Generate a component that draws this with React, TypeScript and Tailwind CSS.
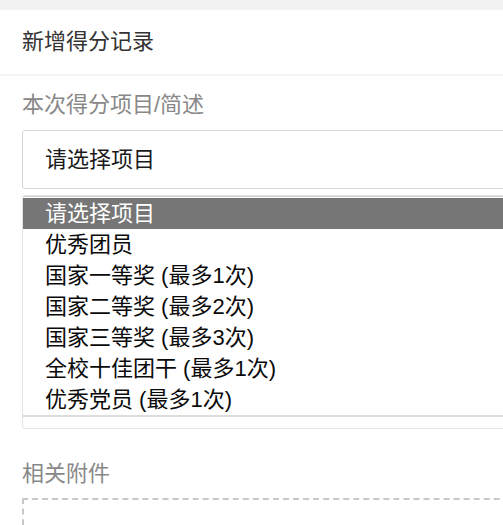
import React from "react";

const font = { fontFamily: '"Liberation Sans", Arial, "Noto Sans CJK SC", sans-serif' };

const options = [
  "请选择项目",
  "优秀团员",
  "国家一等奖 (最多1次)",
  "国家二等奖 (最多2次)",
  "国家三等奖 (最多3次)",
  "全校十佳团干 (最多1次)",
  "优秀党员 (最多1次)",
];

export default function App() {
  return (
    <div className="w-[503px] h-[525px] overflow-hidden bg-[#f2f2f2]" style={font}>
      <div className="mt-[10px] bg-white">
        <div className="h-[66px] flex items-center pl-[22px] pb-[2px] text-[22px] text-[#333] border-b-2 border-[#f4f4f4]">
          新增得分记录
        </div>
        <div className="pl-[22px] w-[560px] pt-[14px] pb-[40px]">
          <div className="text-[22px] leading-[30px] text-[#888]">本次得分项目/简述</div>
          <div className="mt-[10px] h-[59px] border border-[#d6d6d6] rounded-[3px] flex items-center pl-[22px] text-[22px] text-[#1a1a1a]">
            请选择项目
          </div>
          <div className="mt-[6px] border border-[#e3e3e3] rounded-[3px] pb-[11px]">
            <div className="border-t border-b-2 border-[#cfcfcf] border-b-[#dddddd] pt-[1px]">
              {options.map((o, i) => (
                <div
                  key={o}
                  className={
                    i === 0
                      ? "h-[31px] flex items-center pl-[22px] text-[22px] bg-[#767676] text-white"
                      : "h-[31px] flex items-center pl-[22px] text-[22px] text-[#0a0a0a]"
                  }
                >
                  {o}
                </div>
              ))}
            </div>
          </div>
          <div className="mt-[30px] text-[22px] leading-[30px] text-[#888]">相关附件</div>
          <div className="mt-[9px] h-[80px] border-2 border-dashed border-[#c8c8c8] rounded-[2px]"></div>
        </div>
      </div>
    </div>
  );
}
